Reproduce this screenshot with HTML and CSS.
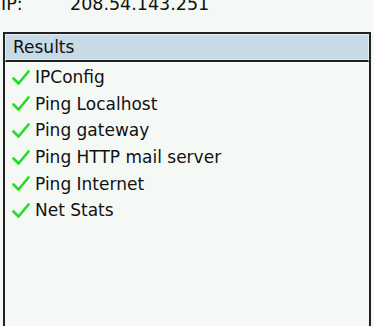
FILE: index.html
```html
<!DOCTYPE html>
<html>
<head>
<meta charset="utf-8">
<link rel="stylesheet" href="styles.css">
</head>
<body>
<div class="ip-row">
  <span class="ip-label">IP:</span>
  <span class="ip-value">208.54.143.251</span>
</div>
<div class="results">
  <div class="results-header">Results</div>
  <ul class="results-list">
    <li class="item"><svg class="check" viewBox="0 0 18 15"><path d="M1.5 8.5 L6.5 13.5 L16.5 1.5" /></svg><span>IPConfig</span></li>
    <li class="item"><svg class="check" viewBox="0 0 18 15"><path d="M1.5 8.5 L6.5 13.5 L16.5 1.5" /></svg><span>Ping Localhost</span></li>
    <li class="item"><svg class="check" viewBox="0 0 18 15"><path d="M1.5 8.5 L6.5 13.5 L16.5 1.5" /></svg><span>Ping gateway</span></li>
    <li class="item"><svg class="check" viewBox="0 0 18 15"><path d="M1.5 8.5 L6.5 13.5 L16.5 1.5" /></svg><span>Ping HTTP mail server</span></li>
    <li class="item"><svg class="check" viewBox="0 0 18 15"><path d="M1.5 8.5 L6.5 13.5 L16.5 1.5" /></svg><span>Ping Internet</span></li>
    <li class="item"><svg class="check" viewBox="0 0 18 15"><path d="M1.5 8.5 L6.5 13.5 L16.5 1.5" /></svg><span>Net Stats</span></li>
  </ul>
</div>
</body>
</html>
```
FILE: styles.css
```css
html, body {
  margin: 0;
  padding: 0;
  height: 100%;
  overflow: hidden;
  background: #f5f9f6;
}
body {
  display: flex;
  flex-direction: column;
  font-family: "DejaVu Sans", sans-serif;
  font-size: 17px;
  color: #111;
}
.ip-row {
  display: flex;
  flex: none;
  height: 14px;
  line-height: 14px;
  margin-top: -3px;
  padding-left: 1px;
  font-size: 17.5px;
}
.ip-label {
  width: 69px;
}
.results {
  flex: 1;
  margin: 21px 3px 0 3px;
  border: 2px solid #222;
  border-bottom: none;
  background: #f5f9f6;
}
.results-header {
  height: 25px;
  line-height: 25px;
  padding-left: 7px;
  background: #c6dbe6;
  border: 1px solid #e1eef7;
  border-bottom: 2px solid #222;
  box-shadow: inset 0 -1px 0 #dbe9f4;
}
.results-list {
  list-style: none;
  margin: 0;
  padding: 2px 0 0 0;
}
.item {
  display: flex;
  align-items: center;
  height: 26.6px;
  padding-left: 7px;
}
.check {
  width: 18px;
  height: 15px;
  margin-right: 5px;
  fill: none;
  stroke: #22dd22;
  stroke-width: 2.6;
  stroke-linecap: round;
  stroke-linejoin: round;
}
```
